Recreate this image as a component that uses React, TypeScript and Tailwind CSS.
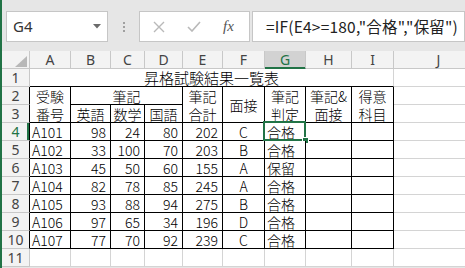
import React from "react";

const COLS = ["A", "B", "C", "D", "E", "F", "G", "H", "I", "J"];

type Row = { id: string; sc: number[]; f: string };

const ROWS: Row[] = [
  { id: "A101", sc: [98, 24, 80, 202], f: "C" },
  { id: "A102", sc: [33, 100, 70, 203], f: "B" },
  { id: "A103", sc: [45, 50, 60, 155], f: "A" },
  { id: "A104", sc: [82, 78, 85, 245], f: "A" },
  { id: "A105", sc: [93, 88, 94, 275], f: "B" },
  { id: "A106", sc: [97, 65, 34, 196], f: "D" },
  { id: "A107", sc: [77, 70, 92, 239], f: "C" },
];

const GRAY = "border-r border-b border-[#d4d4d4] bg-white";
const BLACK = "border-r border-b border-black bg-white";
const RH = "border-r border-b border-[#c8c8c8] bg-[#f3f3f3] flex items-center justify-center font-['Noto_Sans',sans-serif] font-normal text-[14px] text-[#444]";

function RowHead({ n, black, active }: { n: number; black?: boolean; active?: boolean }) {
  return (
    <div
      className={`${RH} ${black ? "border-r-black" : ""} ${
        active ? "bg-[#d2d2d2] text-[#217346] shadow-[inset_-2px_0_0_#217346]" : ""
      }`}
    >
      {n}
    </div>
  );
}

// header cell merged over rows 2-3 with one line per row
function TwoLine({ top, bottom }: { top: string; bottom: string }) {
  return (
    <div className={`${BLACK} row-span-2 flex flex-col`}>
      <span className="h-[18px] flex items-center justify-center">{top}</span>
      <span className="h-[17px] flex items-center justify-center">{bottom}</span>
    </div>
  );
}

export default function App() {
  return (
    <div className="w-[465px] h-[268px] overflow-hidden border-l-2 border-[#217346] bg-[#e6e6e6] font-['Noto_Sans_CJK_JP',sans-serif] text-black">
      {/* Formula bar */}
      <div className="h-[51px] flex items-start pt-[11px] pl-[4px]">
        <div className="w-[102px] h-[31px] bg-white border border-[#c6c6c6] flex items-center pl-[6px] pr-[6px]">
          <span className="font-['Noto_Sans',sans-serif] text-[15px] text-[#333]">G4</span>
          <svg className="ml-auto" width="8" height="5" viewBox="0 0 8 5">
            <path d="M0 0h8L4 4.5z" fill="#6b6b6b" />
          </svg>
        </div>
        <div className="w-[31px] h-[31px] flex flex-col items-center justify-center gap-[2px]">
          <div className="w-[2px] h-[2px] bg-[#a0a0a0]" />
          <div className="w-[2px] h-[2px] bg-[#a0a0a0]" />
          <div className="w-[2px] h-[2px] bg-[#a0a0a0]" />
        </div>
        <div className="w-[111px] h-[31px] bg-white border border-[#c6c6c6] flex items-center pl-[13px]">
          <svg width="12" height="12" viewBox="0 0 12 12">
            <path d="M1 1l10 10M11 1L1 11" stroke="#b9b9b9" strokeWidth="1.4" />
          </svg>
          <svg className="ml-[22px]" width="14" height="11" viewBox="0 0 14 11">
            <path d="M1 6l4 4 8-9" stroke="#b9b9b9" strokeWidth="1.6" fill="none" />
          </svg>
          <span className="ml-[22px] font-['Liberation_Serif',serif] italic text-[15px] text-[#555]">fx</span>
        </div>
        <div className="ml-[2px] flex-1 h-[31px] bg-white border border-[#c6c6c6] flex items-center pl-[13px]">
          <span className="text-[15.5px] tracking-[0.2px] text-[#222] whitespace-nowrap">
            =IF(E4&gt;=180,"合格","保留")
          </span>
        </div>
      </div>

      {/* Sheet */}
      <div className="grid grid-cols-[28px_41px_40px_34px_38px_40px_42px_41px_46px_42px_90px] grid-rows-[18px_repeat(11,18px)] text-[14px] leading-[14px] font-light bg-white">
        {/* column headers */}
        <div className="border-r border-b border-[#c8c8c8] bg-[#f3f3f3] relative">
          <svg className="absolute right-[2px] bottom-[1px]" width="12" height="11" viewBox="0 0 12 11">
            <path d="M12 0v11H0z" fill="#b8b8b8" />
          </svg>
        </div>
        {COLS.map((c) => (
          <div
            key={c}
            className={`border-r border-b flex items-center justify-center font-['Noto_Sans',sans-serif] font-normal text-[14px] ${
              c === "G"
                ? "bg-[#d2d2d2] text-[#217346] border-[#c8c8c8] border-b-[#217346] shadow-[inset_0_-1px_0_#217346]"
                : "bg-[#f3f3f3] text-[#444] border-[#c8c8c8]"
            }`}
          >
            {c}
          </div>
        ))}

        {/* row 1 */}
        <RowHead n={1} />
        <div className="col-span-9 border-r border-b border-[#d4d4d4] border-b-black bg-white flex items-center justify-center text-[15px] leading-[15px]">
          昇格試験結果一覧表
        </div>
        <div className={GRAY} />

        {/* rows 2-3 header */}
        <RowHead n={2} black />
        <TwoLine top="受験" bottom="番号" />
        <div className={`${BLACK} col-span-3 flex items-center justify-center`}>筆記</div>
        <TwoLine top="筆記" bottom="合計" />
        <div className={`${BLACK} row-span-2 flex items-center justify-center`}>面接</div>
        <TwoLine top="筆記" bottom="判定" />
        <TwoLine top="筆記&" bottom="面接" />
        <TwoLine top="得意" bottom="科目" />
        <div className={GRAY} />

        <RowHead n={3} black />
        <div className={`${BLACK} flex items-center justify-center`}>英語</div>
        <div className={`${BLACK} flex items-center justify-center`}>数学</div>
        <div className={`${BLACK} flex items-center justify-center`}>国語</div>
        <div className={GRAY} />

        {/* data rows */}
        {ROWS.map((r, i) => (
          <React.Fragment key={r.id}>
            <RowHead n={i + 4} black active={i === 0} />
            <div className={`${BLACK} flex items-center pl-[2px]`}>{r.id}</div>
            {r.sc.map((v, j) => (
              <div key={j} className={`${BLACK} flex items-center justify-end pr-[4px]`}>
                {v}
              </div>
            ))}
            <div className={`${BLACK} flex items-center justify-center`}>{r.f}</div>
            <div className={`${BLACK} flex items-center pl-[2px] relative`}>
              {r.sc[3] >= 180 ? "合格" : "保留"}
              {i === 0 && (
                <>
                  <div className="absolute -left-[2px] -top-[2px] -right-[1px] -bottom-[1px] border-2 border-[#217346]" />
                  <div className="absolute -right-[4px] -bottom-[4px] w-[7px] h-[7px] bg-[#217346] border border-white" />
                </>
              )}
            </div>
            <div className={BLACK} />
            <div className={BLACK} />
            <div className={GRAY} />
          </React.Fragment>
        ))}

        {/* row 11 */}
        <RowHead n={11} />
        {COLS.map((c) => (
          <div key={c} className={GRAY} />
        ))}
      </div>
    </div>
  );
}
